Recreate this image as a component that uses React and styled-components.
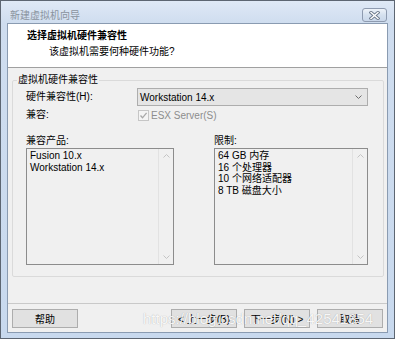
import React from 'react';
import styled, { createGlobalStyle } from 'styled-components';

const GlobalStyle = createGlobalStyle`
  html, body {
    margin: 0;
    padding: 0;
    background: #ffffff;
  }
  body {
    font-family: "Liberation Sans", "Noto Sans CJK SC", sans-serif;
    font-size: 10px;
    color: #000;
  }
`;

const compatible = ['Fusion 10.x', 'Workstation 14.x'];
const limits = ['64 GB 内存', '16 个处理器', '10 个网络适配器', '8 TB 磁盘大小'];

const Chevron = ({ up, color = '#6d6d6d' }) => (
  <svg width="7" height="4" viewBox="0 0 7 4">
    <path
      d={up ? 'M0.5 3.5 L3.5 0.5 L6.5 3.5' : 'M0.5 0.5 L3.5 3.5 L6.5 0.5'}
      fill="none"
      stroke={color}
      strokeWidth="1"
    />
  </svg>
);

const CloseGlyph = () => (
  <svg width="11" height="9" viewBox="0 0 11 9">
    <path d="M2 1.5 L9 7.5 M9 1.5 L2 7.5" stroke="#6f7c8e" strokeWidth="3.2" strokeLinecap="square" />
    <path d="M2 1.5 L9 7.5 M9 1.5 L2 7.5" stroke="#ffffff" strokeWidth="1.4" strokeLinecap="square" />
  </svg>
);

const CheckMark = () => (
  <svg width="11" height="11" viewBox="0 0 11 11">
    <rect x="0.5" y="0.5" width="10" height="10" fill="#f4f4f4" stroke="#c6c6c6" />
    <path d="M2.5 5.5 L4.5 7.8 L8.6 2.8" fill="none" stroke="#a8a8a8" strokeWidth="1.3" />
  </svg>
);

const App = () => {
  return (
    <>
      <GlobalStyle />
      <Window>
        <TitleBar>
          <WindowTitle>新建虚拟机向导</WindowTitle>
          <CloseButton>
            <CloseGlyph />
          </CloseButton>
        </TitleBar>
        <Client>
          <Header>
            <HeaderTitle>选择虚拟机硬件兼容性</HeaderTitle>
            <HeaderSub>该虚拟机需要何种硬件功能?</HeaderSub>
          </Header>
          <Body>
            <Group>
              <Legend>虚拟机硬件兼容性</Legend>
              <GroupInner>
                <FormGrid>
                  <Label>硬件兼容性(H):</Label>
                  <Select>
                    <span>Workstation 14.x</span>
                    <Chevron />
                  </Select>
                  <Label>兼容:</Label>
                  <CheckRow>
                    <CheckMark />
                    <CheckText>ESX Server(S)</CheckText>
                  </CheckRow>
                </FormGrid>
                <ListsRow>
                  <ListColumn width={148}>
                    <Label>兼容产品:</Label>
                    <ListBox>
                      <ListItems>
                        {compatible.map((item) => (
                          <Item key={item}>{item}</Item>
                        ))}
                      </ListItems>
                      <Scroll>
                        <Chevron up color="#c4c4c4" />
                        <Chevron color="#c4c4c4" />
                      </Scroll>
                    </ListBox>
                  </ListColumn>
                  <ListColumn width={154}>
                    <Label>限制:</Label>
                    <ListBox>
                      <ListItems>
                        {limits.map((item) => (
                          <Item key={item}>{item}</Item>
                        ))}
                      </ListItems>
                      <Scroll>
                        <Chevron up color="#c4c4c4" />
                        <Chevron color="#c4c4c4" />
                      </Scroll>
                    </ListBox>
                  </ListColumn>
                </ListsRow>
              </GroupInner>
            </Group>
          </Body>
          <Footer>
            <Button>帮助</Button>
            <ButtonGroup>
              <Button>&lt; 上一步(B)</Button>
              <Button>下一步(N) &gt;</Button>
              <Button>取消</Button>
            </ButtonGroup>
          </Footer>
        </Client>
        <Watermark>https://blog.csdn.net/qq_42541354</Watermark>
      </Window>
    </>
  );
};

export default App;

const Window = styled.div`
  position: relative;
  width: 395px;
  height: 339px;
  box-sizing: border-box;
  border: 1px solid #5d6672;
  background: linear-gradient(180deg, #dfe9f6 0px, #cfddef 22px, #c8d9ee 100%);
  padding: 0 6px 5px 6px;
  display: flex;
  flex-direction: column;
  overflow: hidden;
`;

const TitleBar = styled.div`
  height: 22px;
  display: flex;
  align-items: flex-end;
  justify-content: space-between;
  padding: 0 1px 0 3px;
`;

const WindowTitle = styled.div`
  line-height: 14px;
  color: #8a939e;
  font-size: 10px;
`;

const CloseButton = styled.div`
  width: 25px;
  height: 14px;
  box-sizing: border-box;
  border: 1px solid #8e9bb0;
  border-radius: 3px;
  background: linear-gradient(180deg, #eef3f9 0%, #d5e1ef 50%, #c9d7ea 100%);
  display: flex;
  align-items: center;
  justify-content: center;
  margin-bottom: 1px;
`;

const Client = styled.div`
  flex: 1;
  border: 1px solid #8a9bb1;
  background: #f0f0f0;
  display: flex;
  flex-direction: column;
`;

const Header = styled.div`
  height: 44px;
  box-sizing: border-box;
  background: #ffffff;
  border-bottom: 1px solid #a0a0a0;
  padding: 5px 0 0 19px;
`;

const HeaderTitle = styled.div`
  font-weight: bold;
  line-height: 13px;
`;

const HeaderSub = styled.div`
  line-height: 13px;
  margin-top: 3px;
  padding-left: 22px;
`;

const Body = styled.div`
  flex: 1;
  padding: 6px 3px 0 4px;
`;

const Group = styled.fieldset`
  margin: 0;
  padding: 2px 14px 11px 4px;
  border: 1px solid #dadada;
  border-radius: 2px;
  min-width: 0;
`;

const Legend = styled.legend`
  padding: 0 1px;
  line-height: 12px;
`;

const GroupInner = styled.div`
  padding-left: 9px;
`;

const FormGrid = styled.div`
  display: grid;
  grid-template-columns: 111px 231px;
  grid-auto-rows: 18px;
  align-items: center;
`;

const Label = styled.div`
  line-height: 12px;
`;

const Select = styled.div`
  height: 18px;
  box-sizing: border-box;
  border: 1px solid #adadad;
  background: #e5e5e5;
  display: flex;
  align-items: center;
  justify-content: space-between;
  padding: 0 5px 0 2px;
`;

const CheckRow = styled.div`
  display: flex;
  align-items: center;
  padding-left: 1px;
`;

const CheckText = styled.span`
  margin-left: 2px;
  color: #8d8d8d;
`;

const ListsRow = styled.div`
  display: flex;
  gap: 40px;
  margin-top: 11px;
`;

const ListColumn = styled.div`
  width: ${(p) => p.width}px;
  display: flex;
  flex-direction: column;
  gap: 1px;
`;

const ListBox = styled.div`
  height: 117px;
  box-sizing: border-box;
  border: 1px solid #8c8c8c;
  display: flex;
`;

const ListItems = styled.div`
  flex: 1;
  padding: 1px 0 0 3px;
`;

const Item = styled.div`
  line-height: 11.7px;
`;

const Scroll = styled.div`
  width: 14px;
  border-left: 1px solid #e2e2e2;
  display: flex;
  flex-direction: column;
  justify-content: space-between;
  align-items: center;
  padding: 5px 0 5px;
`;

const Footer = styled.div`
  height: 29px;
  box-sizing: border-box;
  border-top: 1px solid #c9c9c9;
  padding: 5px 4px 0 4px;
  display: flex;
  align-items: flex-start;
  justify-content: space-between;
`;

const ButtonGroup = styled.div`
  display: flex;
  gap: 7px;
`;

const Button = styled.div`
  width: 66px;
  height: 19px;
  box-sizing: border-box;
  border: 1px solid #adadad;
  background: #e1e1e1;
  display: flex;
  align-items: center;
  justify-content: center;
  font-size: 10px;
`;

const Watermark = styled.div`
  position: absolute;
  left: 142px;
  top: 309px;
  font-size: 15px;
  line-height: 18px;
  color: rgba(255, 255, 255, 0.92);
  text-shadow: 0 0 1px rgba(0, 0, 0, 0.3);
  pointer-events: none;
  white-space: nowrap;
`;
